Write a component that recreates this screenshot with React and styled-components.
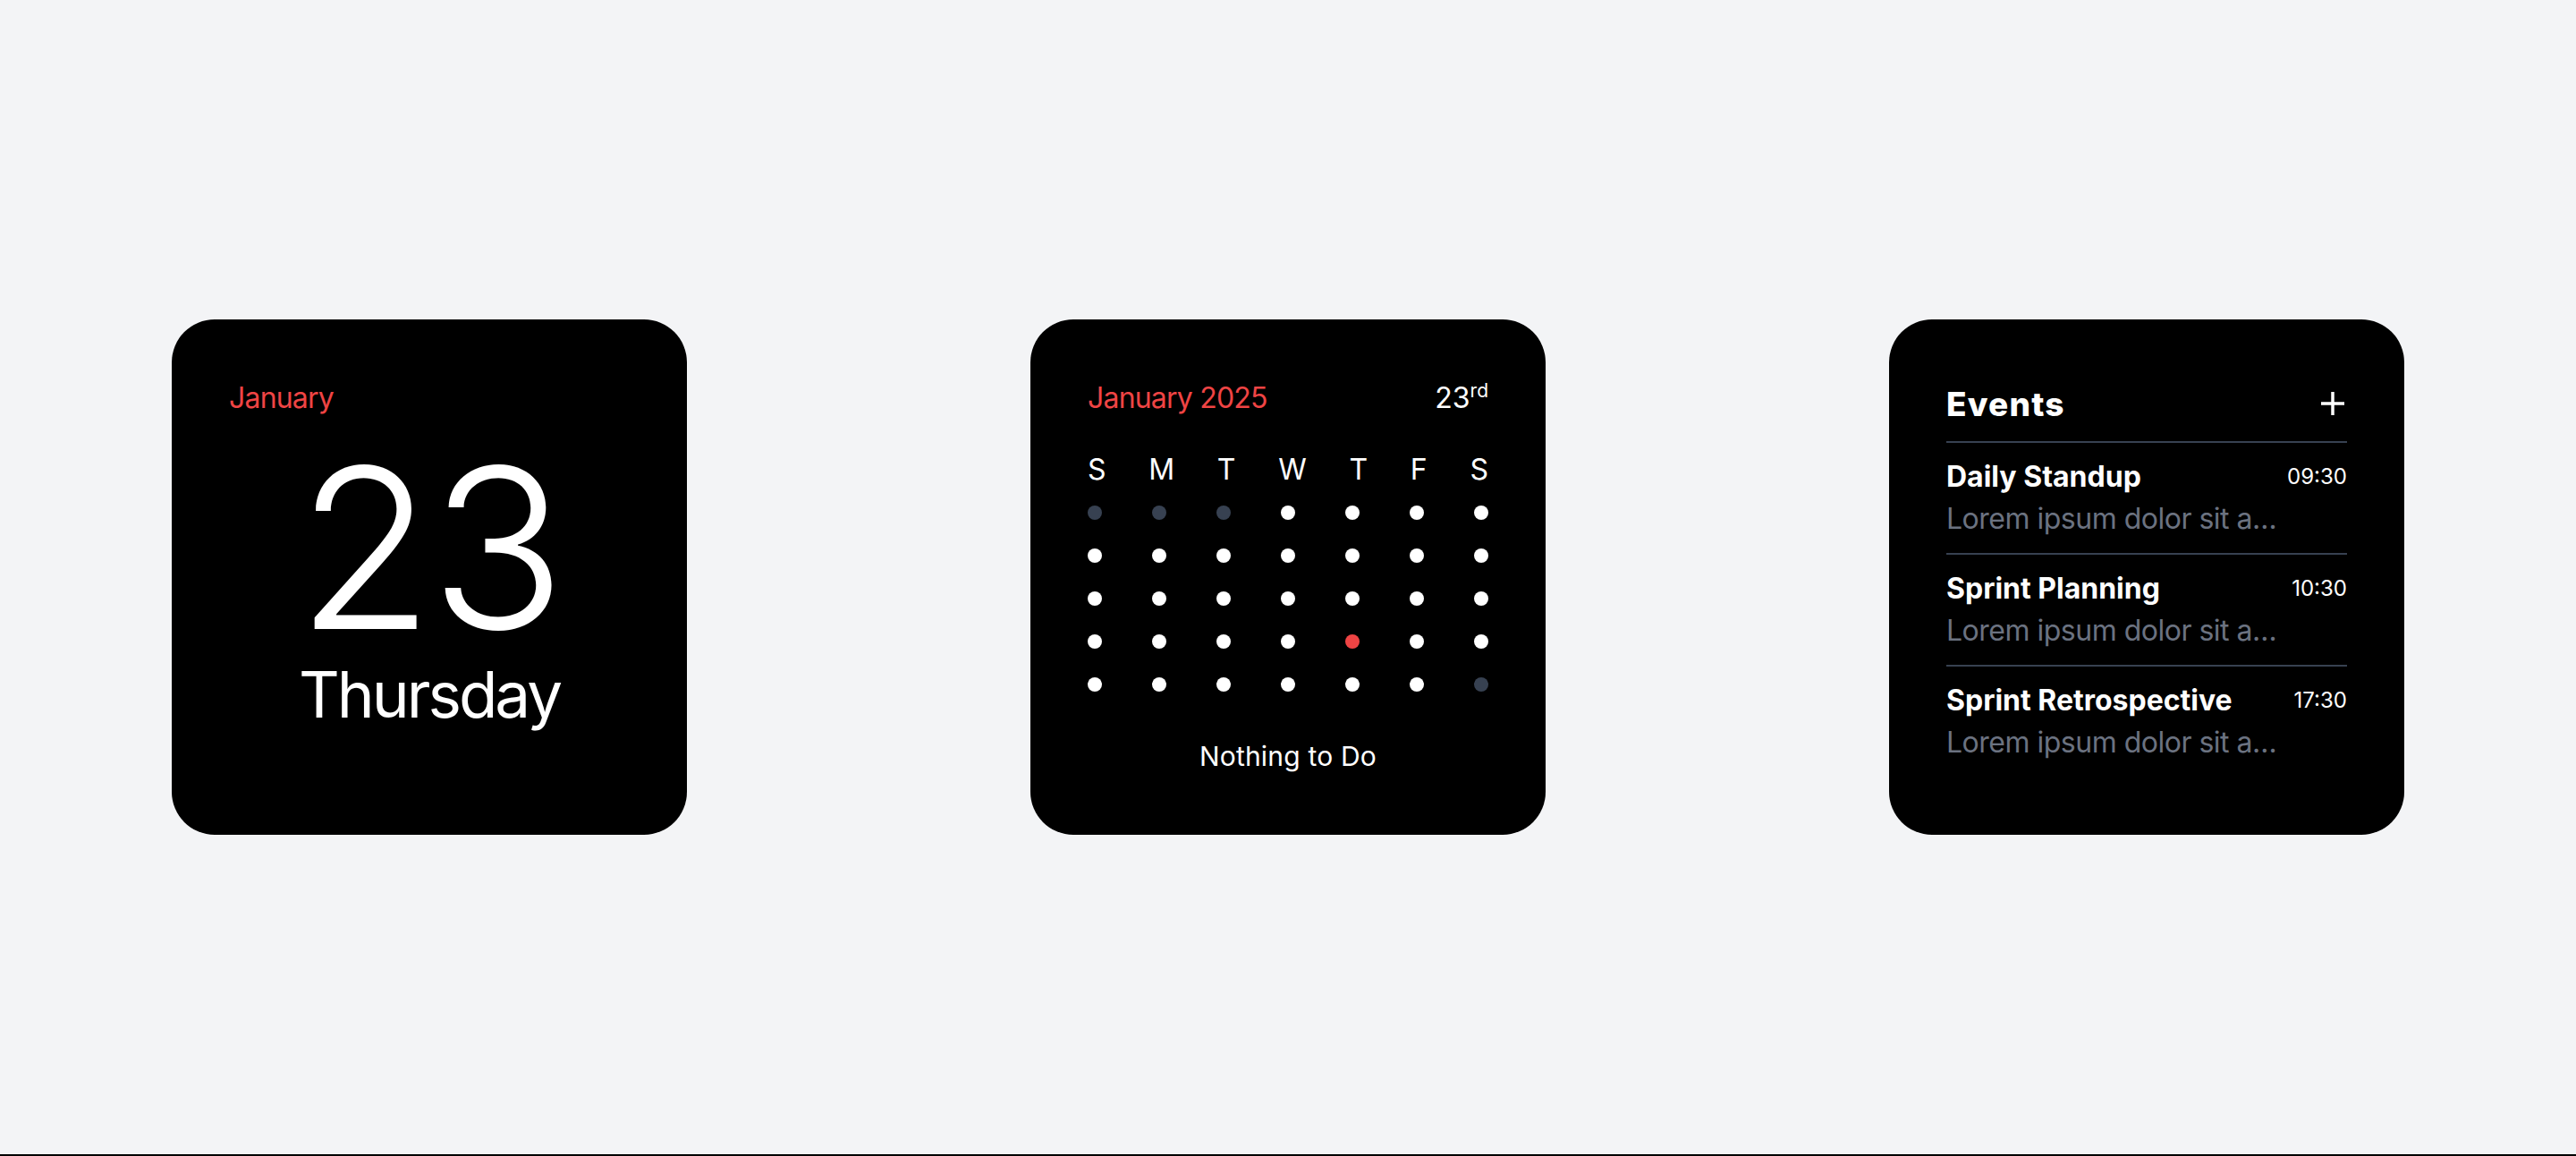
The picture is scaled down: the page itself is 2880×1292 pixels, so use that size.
import styled, { createGlobalStyle } from 'styled-components';

const GlobalStyle = createGlobalStyle`
    html, body {
        margin: 0;
        padding: 0;
        background: #f3f4f6;
    }
    body {
        font-family: Inter, 'Noto Sans', 'Liberation Sans', sans-serif;
    }
`;

const Page = styled.div`
    height: 1290px;
    display: flex;
    align-items: center;
    justify-content: space-around;
`;

const BottomEdge = styled.div`
    height: 2px;
    background: #000;
`;

const Card = styled.div`
    width: 576px;
    height: 576px;
    box-sizing: border-box;
    padding: 64px;
    background: #000;
    border-radius: 48px;
    color: #fff;
    display: flex;
    flex-direction: column;
`;

const Month = styled.div`
    color: #ef4444;
    font-size: 32px;
    line-height: 48px;
    letter-spacing: -0.8px;
`;

const DayBlock = styled.div`
    margin-top: 15px;
    display: flex;
    flex-direction: column;
    align-items: center;
`;

const BigDate = styled.div`
    font-size: 250px;
    font-weight: 300;
    line-height: 256px;
    height: 256px;
    letter-spacing: -4px;
`;

const Weekday = styled.div`
    font-size: 71px;
    line-height: 72px;
    letter-spacing: -3px;
`;

const CalHeader = styled.div`
    display: flex;
    justify-content: space-between;
    align-items: baseline;
    font-size: 32px;
    line-height: 48px;
`;

const Ordinal = styled.sup`
    font-size: 21px;
    line-height: 0;
    vertical-align: 12px;
`;

const WeekRow = styled.div`
    margin-top: 32px;
    display: flex;
    justify-content: space-between;
    font-size: 32px;
    line-height: 48px;
`;

const DotRow = styled.div`
    margin-top: ${(p) => (p.$first ? 16 : 32)}px;
    display: flex;
    justify-content: space-between;
`;

const Dot = styled.span`
    width: 16px;
    height: 16px;
    border-radius: 50%;
    background: ${(p) => (p.$today ? '#ef4444' : p.$muted ? '#374151' : '#fff')};
`;

const Empty = styled.div`
    margin-top: 48px;
    text-align: center;
    font-size: 30px;
    line-height: 48px;
    letter-spacing: 0.2px;
`;

const EventsHead = styled.div`
    display: flex;
    justify-content: space-between;
    align-items: center;
    height: 60px;
    padding-bottom: 12px;
    border-bottom: 2px solid #374151;
`;

const EventsTitle = styled.div`
    font-size: 37px;
    font-weight: 800;
    letter-spacing: 1.2px;
`;

const AddButton = styled.button`
    border: 0;
    padding: 0;
    background: none;
    color: #fff;
    width: 26px;
    height: 26px;
    margin-right: 3px;
    display: flex;
`;

const EventItem = styled.div`
    padding: 16px 0;
    border-top: ${(p) => (p.$first ? 'none' : '2px solid #374151')};
`;

const EventTop = styled.div`
    display: flex;
    justify-content: space-between;
    align-items: center;
    gap: 16px;
`;

const EventName = styled.div`
    font-size: 32px;
    font-weight: 700;
    line-height: 44px;
`;

const EventTime = styled.div`
    font-size: 24px;
    line-height: 32px;
`;

const EventNote = styled.div`
    margin-top: 3px;
    max-width: 388px;
    color: #6b7280;
    font-size: 32px;
    line-height: 44px;
    letter-spacing: -0.5px;
    white-space: nowrap;
    overflow: hidden;
    text-overflow: ellipsis;
`;

const letters = ['S', 'M', 'T', 'W', 'T', 'F', 'S'];

// January 2025 starts on a Wednesday
const weeks = [0, 1, 2, 3, 4].map((w) =>
    [0, 1, 2, 3, 4, 5, 6].map((d) => w * 7 + d - 2)
);

const events = [
    { id: 1, name: 'Daily Standup', time: '09:30' },
    { id: 2, name: 'Sprint Planning', time: '10:30' },
    { id: 3, name: 'Sprint Retrospective', time: '17:30' },
];

const PlusIcon = () => (
    <svg width="26" height="26" viewBox="0 0 26 26" fill="none">
        <path d="M13 0v26M0 13h26" stroke="currentColor" strokeWidth="3.5" />
    </svg>
);

const App = () => {
    return (
        <>
            <GlobalStyle />
            <Page>
                <Card>
                    <Month>January</Month>
                    <DayBlock>
                        <BigDate>23</BigDate>
                        <Weekday>Thursday</Weekday>
                    </DayBlock>
                </Card>

                <Card>
                    <CalHeader>
                        <Month>January 2025</Month>
                        <span>
                            23<Ordinal>rd</Ordinal>
                        </span>
                    </CalHeader>
                    <WeekRow>
                        {letters.map((l, i) => (
                            <span key={i}>{l}</span>
                        ))}
                    </WeekRow>
                    {weeks.map((week, wi) => (
                        <DotRow key={wi} $first={wi === 0}>
                            {week.map((day) => (
                                <Dot key={day} $muted={day < 1 || day > 31} $today={day === 23} />
                            ))}
                        </DotRow>
                    ))}
                    <Empty>Nothing to Do</Empty>
                </Card>

                <Card>
                    <EventsHead>
                        <EventsTitle>Events</EventsTitle>
                        <AddButton>
                            <PlusIcon />
                        </AddButton>
                    </EventsHead>
                    {events.map((ev, i) => (
                        <EventItem key={ev.id} $first={i === 0}>
                            <EventTop>
                                <EventName>{ev.name}</EventName>
                                <EventTime>{ev.time}</EventTime>
                            </EventTop>
                            <EventNote>Lorem ipsum dolor sit amet, consectetur adipiscing elit.</EventNote>
                        </EventItem>
                    ))}
                </Card>
            </Page>
            <BottomEdge />
        </>
    );
};

export default App;
